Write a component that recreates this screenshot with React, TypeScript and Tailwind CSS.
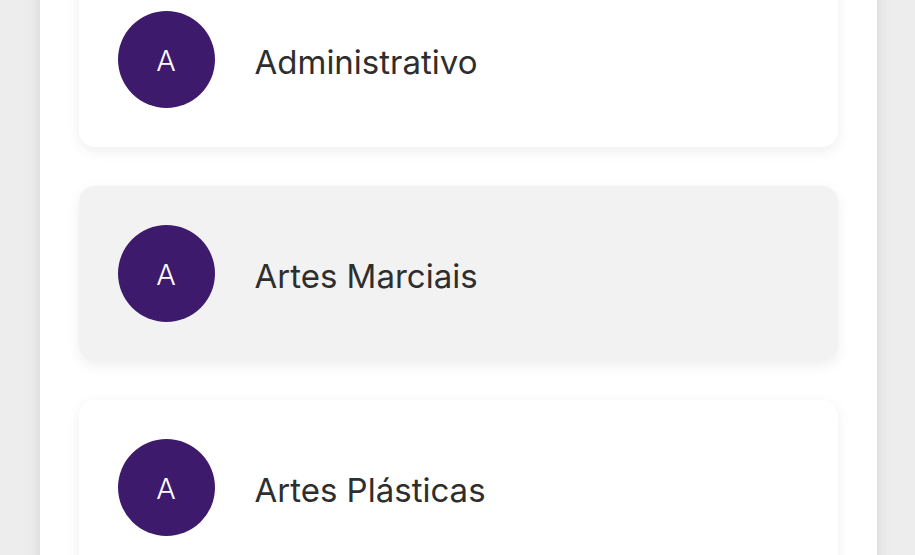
import React from "react";

const items = [
  { name: "Administrativo", bg: "bg-white" },
  { name: "Artes Marciais", bg: "bg-[#f2f2f2]" },
  { name: "Artes Plásticas", bg: "bg-white" },
];

export default function App() {
  return (
    <div
      className="w-[915px] h-[555px] overflow-hidden bg-[#ededed] flex justify-center"
      style={{ fontFamily: "Inter, 'Noto Sans', sans-serif" }}
    >
      <div className="w-[837px] h-[600px] shrink-0 bg-white shadow-[0_0_14px_rgba(0,0,0,0.1)] flex flex-col items-center gap-[39px] mt-[-28px] px-[39px] ml-[1px]">
        {items.map((it) => (
          <div
            key={it.name}
            className={`${it.bg} w-full shrink-0 h-[175px] rounded-[16px] shadow-[0_4px_14px_rgba(0,0,0,0.07)] flex items-center pl-[39px]`}
          >
            <div className="w-[97px] h-[97px] rounded-full bg-[#3e1a6c] flex items-center justify-center text-white text-[29px] font-light pt-[2px]">
              A
            </div>
            <div className="ml-[40px] mt-[6px] text-[33px] text-[#2e2e2e]">
              {it.name}
            </div>
          </div>
        ))}
      </div>
    </div>
  );
}
